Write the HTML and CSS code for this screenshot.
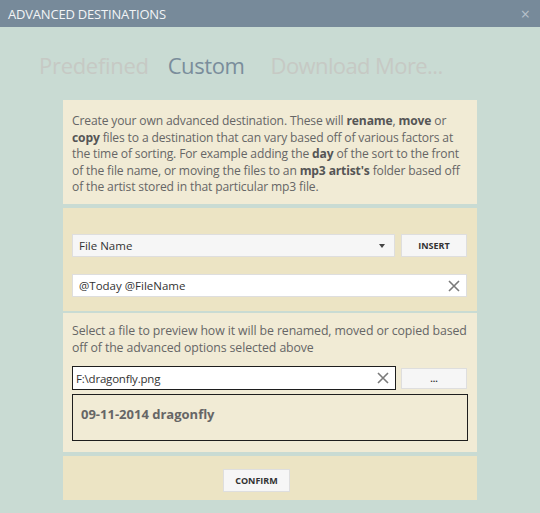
FILE: index.html
```html
<!DOCTYPE html>
<html>
<head>
<meta charset="utf-8">
<link rel="stylesheet" href="styles.css">
</head>
<body>
<div class="titlebar">
  <span class="title">ADVANCED DESTINATIONS</span>
  <span class="close">×</span>
</div>
<div class="tabs">
  <span class="tab">Predefined</span>
  <span class="tab active">Custom</span>
  <span class="tab more">Download More...</span>
</div>
<div class="panels">
  <div class="panel p1">
    <p class="desc">Create your own advanced destination. These will <b>rename</b>, <b>move</b> or <b>copy</b> files to a destination that can vary based off of various factors at the time of sorting. For example adding the <b>day</b> of the sort to the front of the file name, or moving the files to an <b>mp3 artist's</b> folder based off of the artist stored in that particular mp3 file.</p>
  </div>
  <div class="panel p2">
    <div class="row">
      <div class="select"><span>File Name</span><span class="arrow"></span></div>
      <div class="btn">INSERT</div>
    </div>
    <div class="input wide"><span>@Today @FileName</span><svg class="x" width="12" height="12" viewBox="0 0 12 12"><path d="M1 1L11 11M11 1L1 11" stroke="#7a7a7a" stroke-width="1.6"/></svg></div>
  </div>
  <div class="panel p3">
    <p class="desc2">Select a file to preview how it will be renamed, moved or copied based off of the advanced options selected above</p>
    <div class="row row2">
      <div class="input file"><span>F:\dragonfly.png</span><svg class="x" width="12" height="12" viewBox="0 0 12 12"><path d="M1 1L11 11M11 1L1 11" stroke="#7a7a7a" stroke-width="1.6"/></svg></div>
      <div class="btn dots">...</div>
    </div>
    <div class="preview">09-11-2014 dragonfly</div>
  </div>
  <div class="panel p4">
    <div class="btn confirm">CONFIRM</div>
  </div>
</div>
</body>
</html>
```
FILE: styles.css
```css
* { box-sizing: border-box; }
html, body { margin: 0; padding: 0; }
body {
  width: 540px;
  height: 513px;
  background: #c9dbd3;
  font-family: "Open Sans", "Noto Sans", sans-serif;
  color: #666;
  overflow: hidden;
}
.titlebar {
  height: 27px;
  background: #778a9a;
  display: flex;
  align-items: center;
  justify-content: space-between;
  padding: 0 10px 0 8px;
}
.title {
  color: #f2f4f6;
  font-size: 13px;
  letter-spacing: -0.2px;
}
.close {
  color: #b7c1ca;
  font-size: 16px;
  line-height: 1;
}
.tabs {
  display: flex;
  gap: 19px;
  padding: 23px 0 0 39px;
  height: 73px;
}
.tab {
  font-size: 22px;
  color: #c6c9c4;
  line-height: 30px;
  letter-spacing: -0.3px;
}
.tab.active { color: #7a8d9b; letter-spacing: -0.4px; }
.tab.more { margin-left: 7px; letter-spacing: -0.6px; }
.panels {
  margin-left: 63px;
  width: 414px;
}
.panel { background: #f1ebd5; }
.p1 { padding: 13px 9px 8px 9px; height: 104px; }
.desc {
  margin: 0;
  font-size: 12.1px;
  line-height: 16.6px;
  letter-spacing: -0.15px;
}
.desc b, .desc2 b { color: #555; }
.p2 {
  margin-top: 4px;
  background: #ece4c4;
  height: 103px;
  padding: 26px 10px 0 9px;
}
.row { display: flex; gap: 6px; }
.select {
  width: 323px;
  height: 23px;
  background: #f6f6f6;
  border: 1px solid #dedede;
  display: flex;
  align-items: center;
  justify-content: space-between;
  padding: 0 9px 0 6px;
  font-size: 11.5px;
  color: #333;
}
.arrow {
  width: 0; height: 0;
  border-left: 3px solid transparent;
  border-right: 3px solid transparent;
  border-top: 4px solid #444;
}
.btn {
  background: #f6f6f6;
  border: 1px solid #dedede;
  height: 23px;
  width: 66px;
  display: flex;
  align-items: center;
  justify-content: center;
  font-size: 9px;
  font-weight: 700;
  color: #333;
}
.input {
  height: 23px;
  background: #fff;
  border: 1px solid #dedede;
  display: flex;
  align-items: center;
  justify-content: space-between;
  padding: 0 6px 0 6px;
  font-size: 11.5px;
  color: #333;
}
.input.wide { width: 395px; margin-top: 17px; }
.p3 {
  margin-top: 2px;
  height: 139px;
  padding: 9px 9px 0 9px;
}
.desc2 {
  margin: 0;
  font-size: 12.3px;
  line-height: 17px;
  letter-spacing: -0.1px;
}
.row2 { margin-top: 10px; align-items: center; gap: 5px; }
.input.file {
  width: 324px;
  height: 24px;
  border: 1px solid #1e1e1e;
  padding: 0 6px 0 3px;
  letter-spacing: -0.2px;
}
.btn.dots { height: 21px; width: 66px; font-size: 9px; }
.preview {
  margin-top: 4px;
  width: 396px;
  height: 47px;
  border: 1px solid #1e1e1e;
  padding: 10px 0 0 8px;
  font-size: 13px;
  font-weight: 700;
  color: #666;
}
.p4 {
  margin-top: 4px;
  background: #ece4c4;
  height: 44px;
  padding: 13px 0 0 160px;
}
.btn.confirm { width: 67px; height: 23px; }
```
